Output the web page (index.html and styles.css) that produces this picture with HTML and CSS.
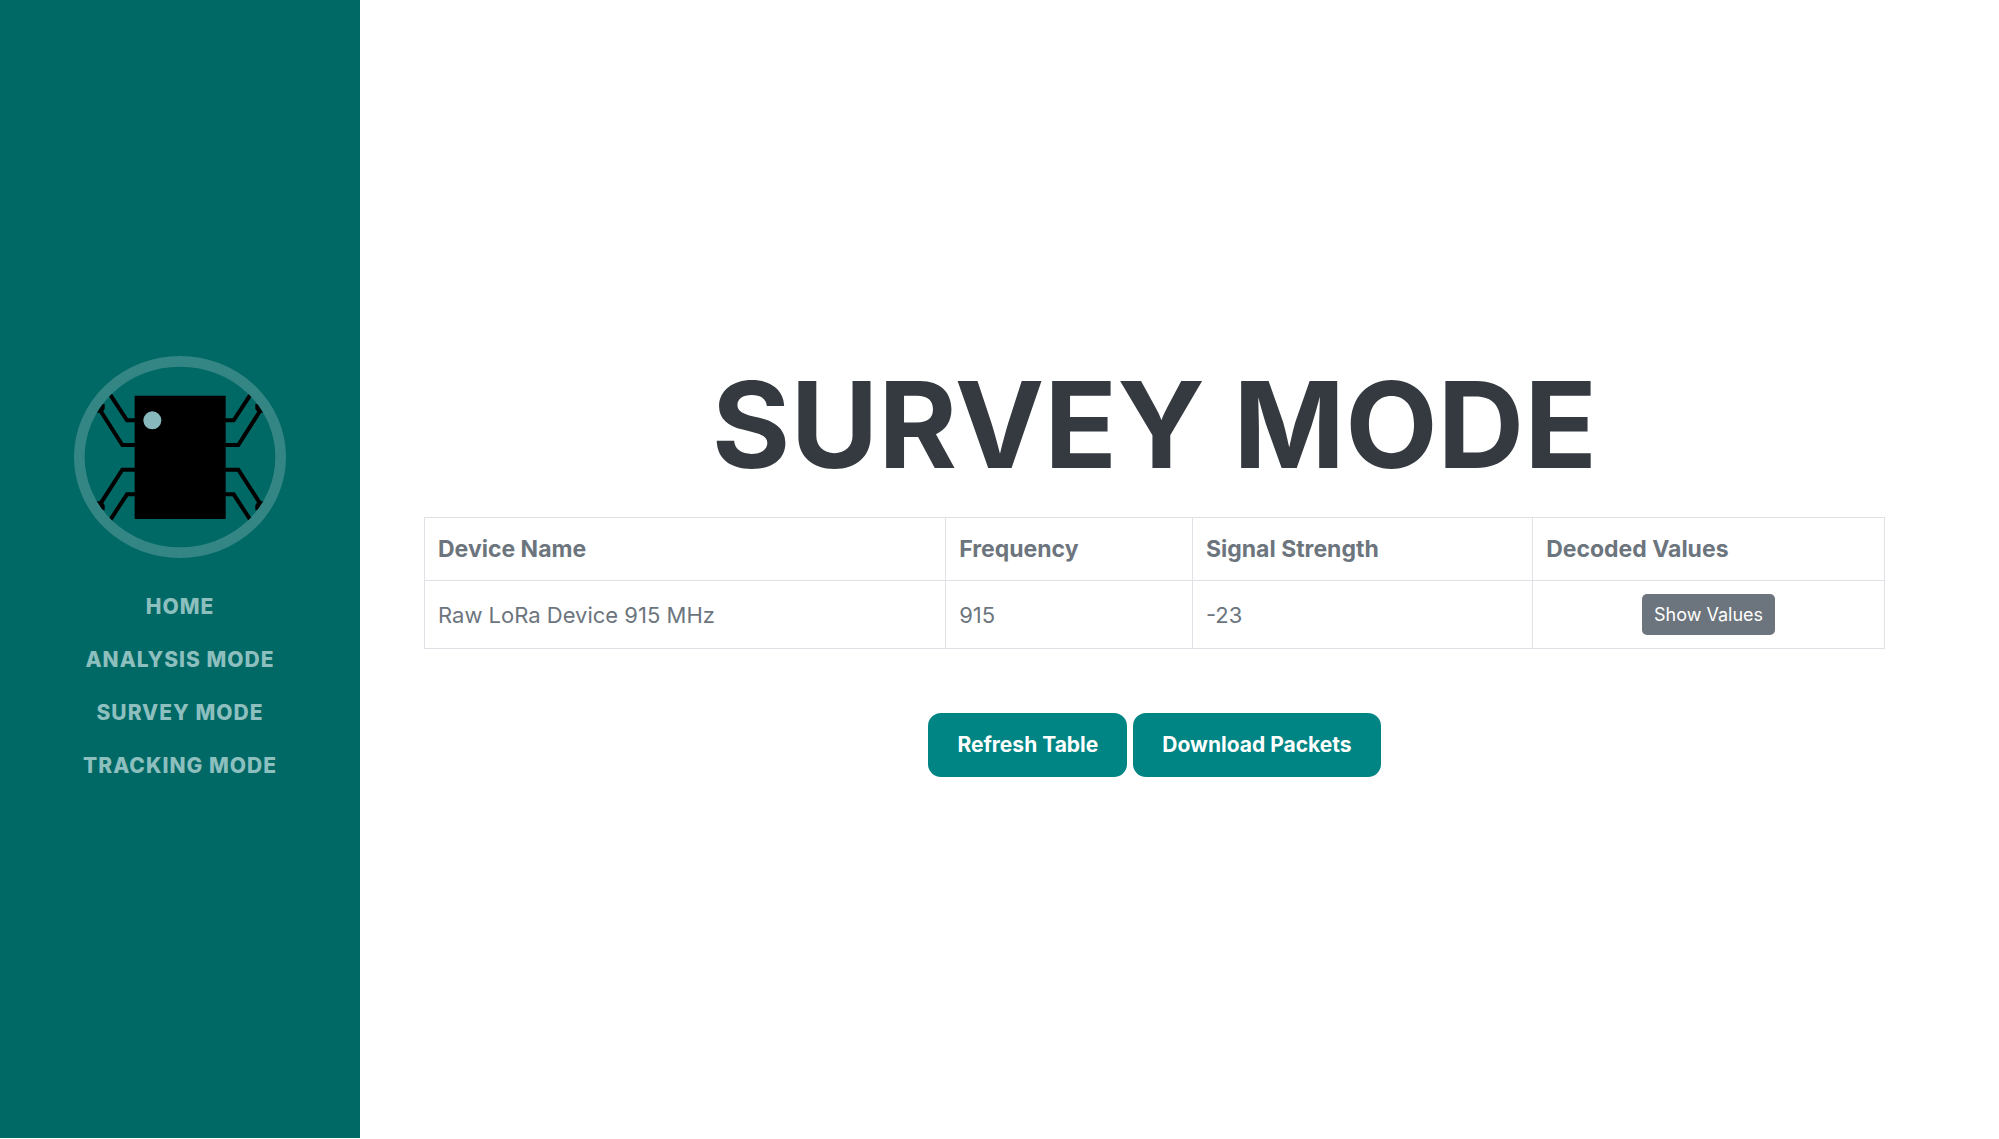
FILE: index.html
```html
<!DOCTYPE html>
<html lang="en">
<head>
<meta charset="utf-8">
<meta name="viewport" content="width=device-width, initial-scale=1">
<title>Survey Mode</title>
<link rel="stylesheet" href="styles.css">
</head>
<body>
<div class="page">
  <nav class="sidebar">
    <svg class="logo" viewBox="42 50 636 606" role="img" aria-label="Chip bug logo">
      <defs><clipPath id="badge"><ellipse cx="360" cy="353" rx="286" ry="272"/></clipPath></defs>
      <ellipse cx="360" cy="353" rx="302" ry="287" fill="none" stroke="#348685" stroke-width="32"/>
      <g clip-path="url(#badge)">
        <g fill="none" stroke="#000" stroke-width="12">
          <path d="M230 243H201L148 162M230 317H187L122 215M230 391H187L122 492M230 465H201L148 546"/>
          <path d="M490 243H521L574 162M490 317H535L600 215M490 391H535L600 492M490 465H521L574 546"/>
        </g>
        <path d="M108 220H126L134 209V193L100 200ZM612 220H594L586 209V193L620 200ZM108 486H126L134 497V513L100 506ZM612 486H594L586 497V513L620 506Z"/>
      </g>
      <path d="M224 169H497V539H224Z"/>
      <circle cx="277" cy="243" r="27" fill="#87b9bc"/>
    </svg>
    <ul class="menu">
      <li><a href="#home">HOME</a></li>
      <li><a href="#analysis">ANALYSIS MODE</a></li>
      <li><a href="#survey">SURVEY MODE</a></li>
      <li><a href="#tracking">TRACKING MODE</a></li>
    </ul>
  </nav>
  <main class="content">
    <h1>SURVEY MODE</h1>
    <table class="devices">
      <colgroup><col class="col-name"><col class="col-freq"><col class="col-signal"><col class="col-values"></colgroup>
      <thead>
        <tr><th scope="col">Device Name</th><th scope="col">Frequency</th><th scope="col">Signal Strength</th><th scope="col">Decoded Values</th></tr>
      </thead>
      <tbody>
        <tr><td>Raw LoRa Device 915 MHz</td><td>915</td><td>-23</td><td class="action"><button class="show" type="button">Show Values</button></td></tr>
      </tbody>
    </table>
    <div class="buttons">
      <button class="primary" type="button">Refresh Table</button>
      <button class="primary" type="button">Download Packets</button>
    </div>
  </main>
</div>
</body>
</html>
```
FILE: styles.css
```css
* { box-sizing: border-box; }
body {
  margin: 0;
  background: #fff;
  color: #6c757d;
  font-family: Inter, "Liberation Sans", sans-serif;
  font-size: 22px;
  line-height: 36px;
}
.page { display: flex; min-height: 100vh; padding-bottom: 1px; }
.sidebar {
  flex: 0 0 360px;
  display: flex;
  flex-direction: column;
  align-items: center;
  justify-content: center;
  padding-top: 10px;
  background: #006865;
}
.logo { width: 212px; height: 202px; margin-bottom: 22px; }
.menu { margin: 0; padding: 0; list-style: none; text-align: center; }
.menu a {
  display: block;
  padding: 10px;
  color: #8dbfbe;
  font-size: 21px;
  font-weight: 800;
  line-height: 33px;
  letter-spacing: 1px;
  text-decoration: none;
}
.content {
  flex: 1;
  display: flex;
  flex-direction: column;
  justify-content: center;
  padding: 0 114px 14px 64px;
}
h1 {
  margin: 0 0 14px;
  color: #343a40;
  font-size: 120px;
  font-weight: 700;
  line-height: 156px;
  text-align: center;
}
.devices { width: 100%; border-collapse: collapse; table-layout: fixed; }
.col-name { width: 35.7%; }
.col-freq { width: 16.9%; }
.col-signal { width: 23.3%; }
.col-values { width: 24.1%; }
.devices th, .devices td { padding: 13px; border: 1px solid #dee2e6; text-align: left; }
.devices th { font-size: 23px; font-weight: 700; }
.devices .action { text-align: center; }
button { border: 0; color: #fff; font-family: inherit; }
.show {
  display: inline-block;
  padding: 6px 12px;
  border-radius: 5px;
  background: #6c757d;
  font-size: 18px;
  line-height: 29px;
  vertical-align: top;
}
.buttons { display: flex; justify-content: center; gap: 6px; margin-top: 64px; }
.primary {
  padding: 16px 29px;
  border-radius: 13px;
  background: #008584;
  font-size: 21px;
  font-weight: 700;
  line-height: 32px;
}
```
